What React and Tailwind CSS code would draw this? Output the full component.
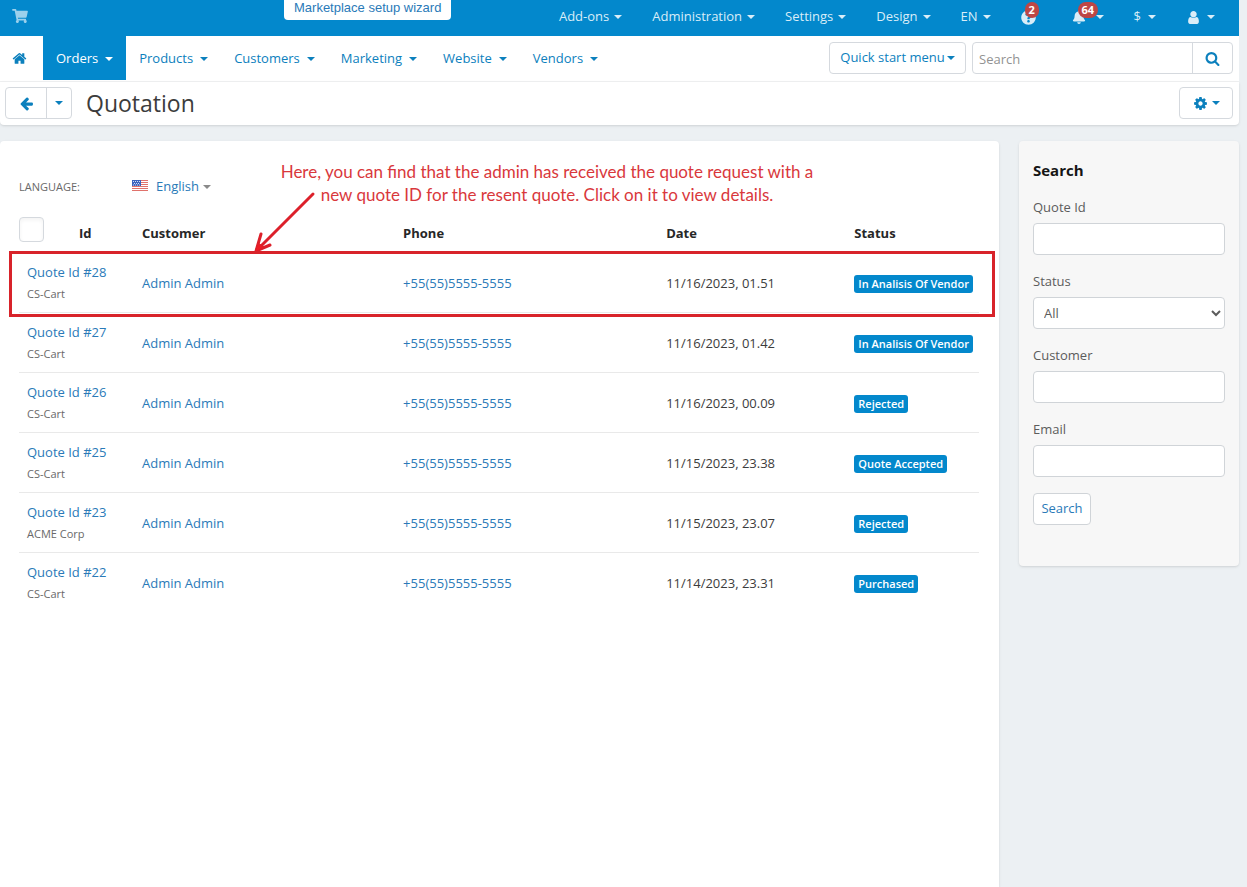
import React, { useState } from 'react';
import { FaShoppingCart, FaBell, FaQuestionCircle } from 'react-icons/fa';

const quotes = [
  { id: 28, company: 'CS-Cart', date: '11/16/2023, 01.51', status: 'In Analisis Of Vendor' },
  { id: 27, company: 'CS-Cart', date: '11/16/2023, 01.42', status: 'In Analisis Of Vendor' },
  { id: 26, company: 'CS-Cart', date: '11/16/2023, 00.09', status: 'Rejected' },
  { id: 25, company: 'CS-Cart', date: '11/15/2023, 23.38', status: 'Quote Accepted' },
  { id: 23, company: 'ACME Corp', date: '11/15/2023, 23.07', status: 'Rejected' },
  { id: 22, company: 'CS-Cart', date: '11/14/2023, 23.31', status: 'Purchased' }
];

// Older, chunkier icon shapes on a 1792 grid
const iconPaths = {
  home: 'M1472 992v480q0 26-19 45t-45 19h-384v-384h-256v384h-384q-26 0-45-19t-19-45v-480q0-1 .5-3t.5-3l575-474 575 474q1 2 1 6zm223-69l-62 74q-8 9-21 11h-3q-13 0-21-7l-692-577-692 577q-12 8-24 7-13-2-21-11l-62-74q-8-10-7-23.5t11-21.5l719-599q32-26 76-26t76 26l244 204v-195q0-14 9-23t23-9h192q14 0 23 9t9 23v408l219 182q10 8 11 21.5t-7 23.5z',
  arrow: 'M1664 896v128q0 53-32.5 90.5t-84.5 37.5h-704l293 294q38 36 38 90t-38 90l-75 76q-37 37-90 37-52 0-91-37l-651-652q-37-37-37-90 0-52 37-91l651-650q38-38 91-38 52 0 90 38l75 74q38 38 38 91t-38 91l-293 293h704q52 0 84.5 37.5t32.5 90.5z',
  search: 'M1216 832q0-185-131.5-316.5t-316.5-131.5-316.5 131.5-131.5 316.5 131.5 316.5 316.5 131.5 316.5-131.5 131.5-316.5zm512 832q0 52-38 90t-90 38q-54 0-90-38l-343-342q-179 124-399 124-143 0-273.5-55.5t-225-150-150-225-55.5-273.5 55.5-273.5 150-225 225-150 273.5-55.5 273.5 55.5 225 150 150 225 55.5 273.5q0 220-124 399l343 343q37 37 37 90z',
  cog: 'M1152 896q0-106-75-181t-181-75-181 75-75 181 75 181 181 75 181-75 75-181zm512-109v222q0 12-8 23t-20 13l-185 28q-19 54-39 91 35 50 107 138 10 12 10 25t-9 23q-27 37-99 108t-94 71q-12 0-26-9l-138-108q-44 23-91 38-16 136-29 186-7 28-36 28h-222q-14 0-24.5-8.5t-11.5-21.5l-28-184q-49-16-90-37l-141 107q-10 9-25 9-14 0-25-11-126-114-165-168-7-10-7-23 0-12 8-23 15-21 51-66.5t54-70.5q-27-50-41-99l-183-27q-13-2-21-12.5t-8-23.5v-222q0-12 8-23t19-13l186-28q14-46 39-92-40-57-107-138-10-12-10-24 0-10 9-23 26-36 98.5-107.5t94.5-71.5q13 0 26 10l138 107q44-23 91-38 16-136 29-186 7-28 36-28h222q14 0 24.5 8.5t11.5 21.5l28 184q49 16 90 37l142-107q9-9 24-9 13 0 25 10 129 119 165 170 7 8 7 22 0 12-8 23-15 21-51 66.5t-54 70.5q26 50 41 98l183 28q13 2 21 12.5t8 23.5z',
  user: 'M1536 1399q0 109-62.5 187t-150.5 78h-854q-88 0-150.5-78t-62.5-187q0-85 8.5-160.5t31.5-152 58.5-131 94-89 134.5-34.5q131 128 313 128t313-128q76 0 134.5 34.5t94 89 58.5 131 31.5 152 8.5 160.5zm-256-887q0 159-112.5 271.5t-271.5 112.5-271.5-112.5-112.5-271.5 112.5-271.5 271.5-112.5 271.5 112.5 112.5 271.5z'
};

const Icon = ({ name }) => (
  <svg viewBox="0 0 1792 1792" className="w-[15px] h-[15px]" fill="currentColor">
    <path d={iconPaths[name]} />
  </svg>
);

const Caret = ({ className = '' }) => (
  <span className={`inline-block w-0 h-0 border-x-4 border-t-4 border-x-transparent border-t-current ${className}`} />
);

const TopBar = () => (
  <header className="bg-[#0388cc] text-[#d9edf8] h-9 flex items-start justify-between pl-3 pr-6">
    <div className="flex items-start">
      <a href="#store" aria-label="Storefront" className="h-8 flex items-center text-[#9bd0ec]">
        <FaShoppingCart className="w-4 h-[14px]" />
      </a>
      <a href="#wizard" className="ml-64 bg-white text-[#2a7ab8] rounded-b h-5 leading-4 px-[10px] text-[13px] font-['Liberation_Sans',sans-serif]">
        Marketplace setup wizard
      </a>
    </div>
    <nav className="flex items-center gap-[30px] h-[34px]">
      {['Add-ons', 'Administration', 'Settings', 'Design', 'EN'].map(item => (
        <button key={item} className="flex items-center gap-[5px]">
          {item}
          <Caret />
        </button>
      ))}
      <button aria-label="Help" className="relative">
        <FaQuestionCircle className="w-[15px] h-[15px]" />
        <span className="absolute -top-2 left-1 bg-[#bd4645] text-white text-[11px] font-bold leading-4 rounded-full px-1">2</span>
      </button>
      <button aria-label="Notifications" className="relative flex items-center gap-[10px] ml-[6px]">
        <FaBell className="w-[14px] h-[14px]" />
        <Caret />
        <span className="absolute -top-2 left-[6px] bg-[#bd4645] text-white text-[11px] font-bold leading-4 rounded-full px-1">64</span>
      </button>
      <button className="flex items-center gap-[7px]">
        $
        <Caret />
      </button>
      <button aria-label="Account" className="flex items-center gap-[6px]">
        <Icon name="user" />
        <Caret />
      </button>
    </nav>
  </header>
);

const MainNav = () => (
  <div className="bg-white h-[46px] border-b border-[#f0f1f2] flex items-start justify-between pr-[6px] text-[#0c80bd]">
    <nav className="flex h-11">
      <a href="#home" aria-label="Home" className="w-[43px] pr-1 flex items-center justify-center">
        <Icon name="home" />
      </a>
      <button className="bg-[#0388cc] text-white px-[13px] pt-[2px] flex items-center gap-[7px]">
        Orders
        <Caret />
      </button>
      {['Products', 'Customers', 'Marketing', 'Website', 'Vendors'].map(item => (
        <button key={item} className="px-[13px] pt-[2px] flex items-center gap-[7px]">
          {item}
          <Caret />
        </button>
      ))}
    </nav>
    <div className="flex gap-[6px] pt-[6px]">
      <button className="h-8 w-[137px] flex items-center justify-center gap-[2px] border border-[#d5d9de] rounded">
        Quick start menu
        <Caret />
      </button>
      <form className="flex h-8 border border-[#d5d9de] rounded">
        <input
          type="text"
          aria-label="Search"
          placeholder="Search"
          className="w-[219px] px-[6px] pt-[3px] outline-none placeholder:text-[#929292]"
        />
        <button aria-label="Go" className="w-10 flex items-center justify-center border-l border-[#d5d9de]">
          <Icon name="search" />
        </button>
      </form>
    </div>
  </div>
);

const TitleBar = () => (
  <div className="bg-white h-[43px] rounded-b shadow-sm flex items-start justify-between pt-[5px] pl-[5px] pr-[6px] text-[#0c80bd]">
    <div className="flex items-center">
      <div className="flex h-8 border border-[#d5d9de] rounded">
        <button aria-label="Back" className="w-10 flex items-center justify-center">
          <Icon name="arrow" />
        </button>
        <button aria-label="More" className="w-[25px] flex items-center justify-center border-l border-[#d5d9de]">
          <Caret />
        </button>
      </div>
      <h1 className="ml-[14px] text-[23px] leading-8 text-[#3c3c3c]">Quotation</h1>
    </div>
    <button aria-label="Settings" className="h-8 w-[54px] flex items-center justify-center gap-1 border border-[#d5d9de] rounded">
      <Icon name="cog" />
      <Caret />
    </button>
  </div>
);

const UsFlag = () => (
  <svg viewBox="0 0 16 11" className="w-4 h-[11px] mb-[3px]">
    <rect width="16" height="11" fill="#fff" />
    <path d="M0 .5h16M0 2.5h16M0 4.5h16M0 6.5h16M0 8.5h16M0 10.5h16" stroke="#e0726b" />
    <rect width="9" height="6" fill="#3b62bd" />
    <path d="M1 1.5h7M2 3.5h6M1 5h7" stroke="#cfdcf5" strokeDasharray="1 1" />
  </svg>
);

// Red callout drawn over the first quote
const Callout = () => (
  <>
    <p className="absolute left-[265px] top-[19px] w-[564px] text-center whitespace-nowrap text-[17px] leading-[23px] text-[#d9383c] font-[Lato,'Open_Sans',sans-serif] pointer-events-none">
      Here, you can find that the admin has received the quote request with a
      <br />
      new quote ID for the resent quote. Click on it to view details.
    </p>
    <svg viewBox="0 0 70 66" className="absolute left-[250px] top-[48px] w-[70px] h-[66px] pointer-events-none" fill="none" stroke="#dc202a" strokeLinecap="round">
      <path d="M63 5 8 60" strokeWidth="3" />
      <path d="M11 45 6 62 20 56" strokeWidth="3" />
      <path d="M5 63 8 54 14 58Z" fill="#ed1c24" strokeWidth="1" />
    </svg>
    <div className="absolute left-[9px] right-1 top-[110px] h-[66px] border-3 border-[#d8232a] pointer-events-none" />
  </>
);

const QuoteTable = () => (
  <table className="w-full table-fixed text-left">
    <colgroup>
      <col className="w-[52px]" />
      <col className="w-[63px]" />
      <col className="w-[27.2%]" />
      <col className="w-[27.4%]" />
      <col className="w-[19.6%]" />
      <col />
    </colgroup>
    <thead>
      <tr className="h-[43px] text-[#272727]">
        <th className="align-top pt-2">
          <input type="checkbox" aria-label="Select all" className="block appearance-none w-[25px] h-[25px] bg-white border border-[#d5d9de] rounded shadow-inner" />
        </th>
        <th className="px-2 pt-[6px]">Id</th>
        <th className="px-2 pt-[6px]">Customer</th>
        <th className="px-2 pt-[6px]">Phone</th>
        <th className="px-2 pt-[6px]">Date</th>
        <th className="px-2 pt-[6px]">Status</th>
      </tr>
    </thead>
    <tbody>
      {quotes.map(quote => (
        <tr key={quote.id} className="h-[60px] border-b border-[#e9e9e9] last:border-b-transparent">
          <td colSpan={2} className="px-2 pt-[2px]">
            <a href={`#quote-${quote.id}`} className="block leading-5 text-[#2a7ab8]">Quote Id #{quote.id}</a>
            <span className="block mt-[2px] text-[11px] leading-5 text-[#696969]">{quote.company}</span>
          </td>
          <td className="px-2 pt-1"><a href="#customer" className="text-[#2a7ab8]">Admin Admin</a></td>
          <td className="px-2 pt-1"><a href="#phone" className="text-[#2a7ab8]">+55(55)5555-5555</a></td>
          <td className="px-2 pt-1 text-[#3c3c3c]">{quote.date}</td>
          <td className="px-2 pt-1">
            <span className="inline-block bg-[#0388cc] text-white text-[11px] leading-[18px] font-semibold rounded-[3px] px-1 whitespace-nowrap">
              {quote.status}
            </span>
          </td>
        </tr>
      ))}
    </tbody>
  </table>
);

const fieldClass = 'block w-full h-8 bg-white border border-[#d0d4d8] rounded';

const SearchPanel = () => {
  const [status, setStatus] = useState('All');

  return (
    <aside className="w-[220px] shrink-0 self-start bg-[#f7f7f7] rounded shadow-sm px-[14px] pt-[19px] pb-[41px] text-[#5c5c5c]">
      <h2 className="text-[15px] leading-5 font-bold text-[#151515]">Search</h2>
      <form className="mt-[17px] flex flex-col gap-4">
        <div>
          <label htmlFor="quote-id" className="block h-[26px] leading-5">Quote Id</label>
          <input id="quote-id" type="text" className={fieldClass} />
        </div>
        <div>
          <label htmlFor="status" className="block h-[26px] leading-5">Status</label>
          <select id="status" value={status} onChange={e => setStatus(e.target.value)} className={`${fieldClass} pl-[6px]`}>
            <option>All</option>
            <option>Rejected</option>
            <option>Quote Accepted</option>
            <option>Purchased</option>
          </select>
        </div>
        <div>
          <label htmlFor="customer" className="block h-[26px] leading-5">Customer</label>
          <input id="customer" type="text" className={fieldClass} />
        </div>
        <div>
          <label htmlFor="email" className="block h-[26px] leading-5">Email</label>
          <input id="email" type="text" className={fieldClass} />
        </div>
        <button type="button" className="self-start h-8 w-[58px] bg-white border border-[#d0d4d8] rounded text-[#2a7ab8]">Search</button>
      </form>
    </aside>
  );
};

const App = () => {
  return (
    <div className="min-h-screen flex flex-col bg-[#ecf0f3] pr-2 text-[13px] font-['Open_Sans','Noto_Sans',sans-serif]">
      <TopBar />
      <MainNav />
      <TitleBar />
      <div className="flex-1 flex gap-5 mt-4">
        <main className="relative flex-1 bg-white rounded-t shadow-sm px-5 pl-[19px] pt-9">
          <div className="flex items-center h-5">
            <span className="w-[113px] text-[11px] text-[#696969]">LANGUAGE:</span>
            <UsFlag />
            <button className="ml-2 flex items-center gap-1 text-[#2a7ab8]">
              English
              <Caret className="text-[#8a8a8a]" />
            </button>
          </div>
          <div className="mt-3">
            <QuoteTable />
          </div>
          <Callout />
        </main>
        <SearchPanel />
      </div>
    </div>
  );
};

export default App;
